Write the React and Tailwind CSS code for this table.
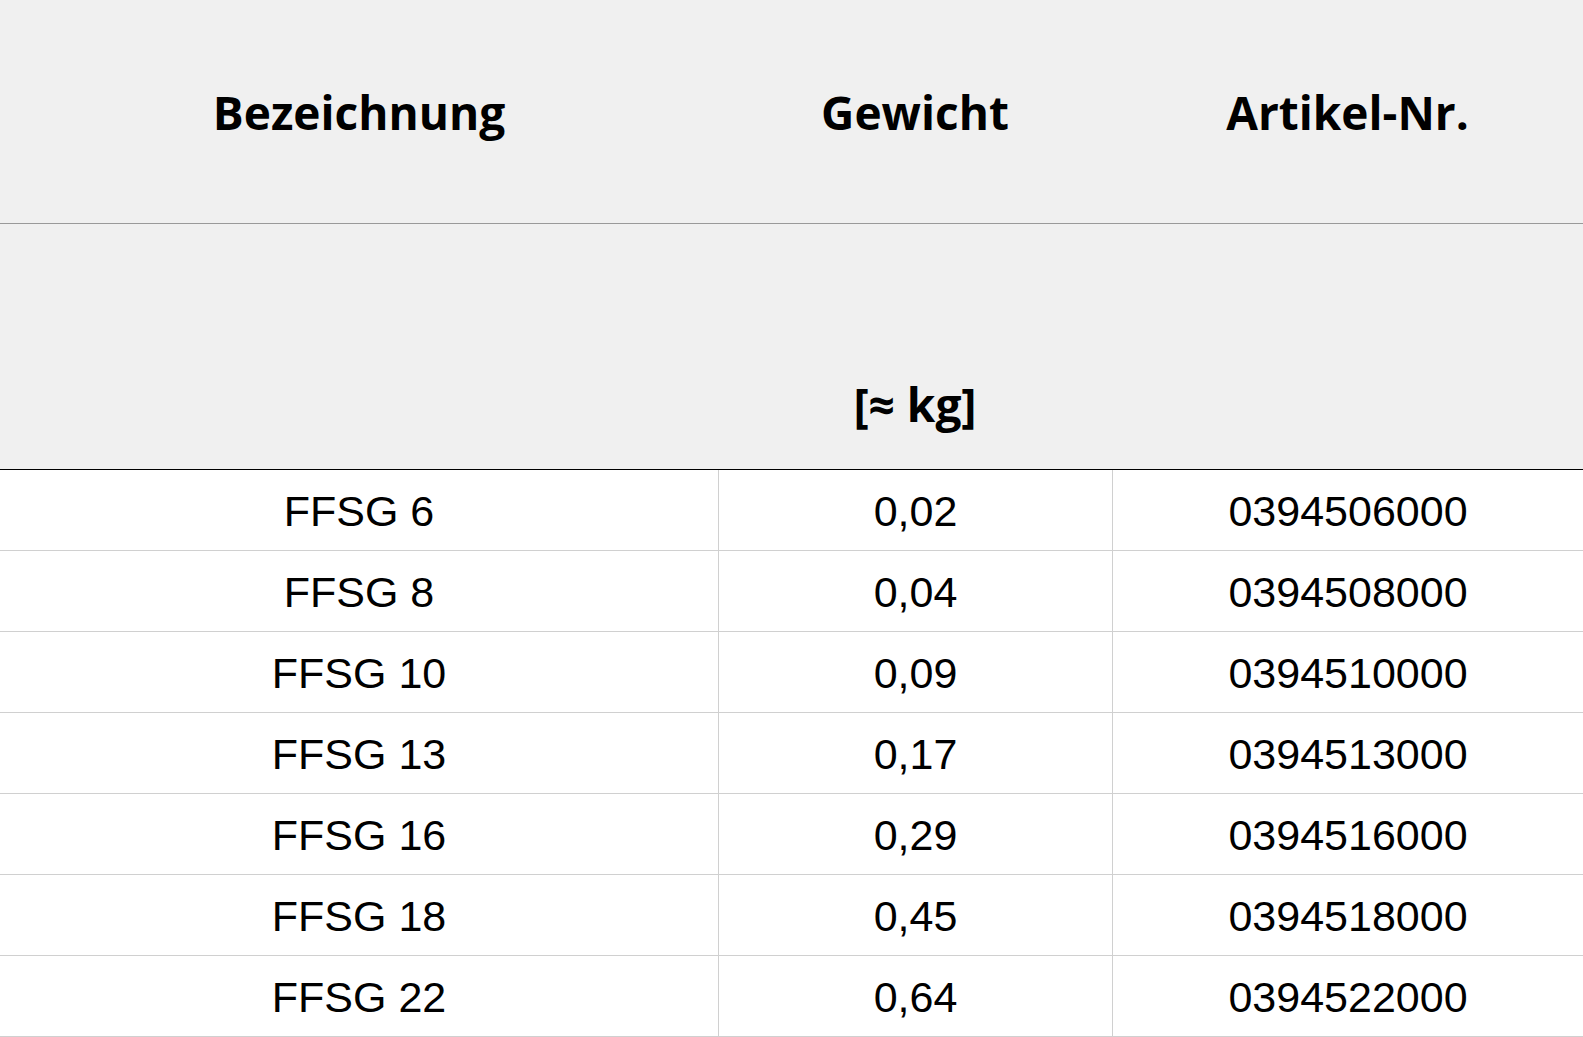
const rows = [
  { name: "FFSG 6", weight: "0,02", nr: "0394506000" },
  { name: "FFSG 8", weight: "0,04", nr: "0394508000" },
  { name: "FFSG 10", weight: "0,09", nr: "0394510000" },
  { name: "FFSG 13", weight: "0,17", nr: "0394513000" },
  { name: "FFSG 16", weight: "0,29", nr: "0394516000" },
  { name: "FFSG 18", weight: "0,45", nr: "0394518000" },
  { name: "FFSG 22", weight: "0,64", nr: "0394522000" },
];

const head = "flex justify-center text-[46px] font-bold text-black leading-none";

export default function App() {
  return (
    <div className="w-[1583px] h-[1037px] bg-white overflow-hidden">
      {/* header */}
      <div className="bg-[#f0f0f0] font-['Open_Sans',sans-serif]">
        <div className="grid grid-cols-[718px_394px_1fr] h-[224px] items-center border-b border-[#999999] pt-[1px]">
          <div className={head}>Bezeichnung</div>
          <div className={head}>Gewicht</div>
          <div className={head}>Artikel-Nr.</div>
        </div>
        <div className="grid grid-cols-[718px_394px_1fr] h-[246px] items-end border-b border-black pb-[42px]">
          <div />
          <div className={head}>[≈ kg]</div>
          <div />
        </div>
      </div>

      {/* rows */}
      <div className="font-['Liberation_Sans',Arial,sans-serif] text-[43px] text-black">
        {rows.map((r) => (
          <div
            key={r.nr}
            className="grid grid-cols-[718px_394px_1fr] h-[81px] border-b border-[#d0d0d0]"
          >
            <div className="flex items-center justify-center pt-[2px]">{r.name}</div>
            <div className="flex items-center justify-center pt-[2px] border-l border-[#d0d0d0]">{r.weight}</div>
            <div className="flex items-center justify-center pt-[2px] border-l border-[#d0d0d0]">{r.nr}</div>
          </div>
        ))}
      </div>
    </div>
  );
}
